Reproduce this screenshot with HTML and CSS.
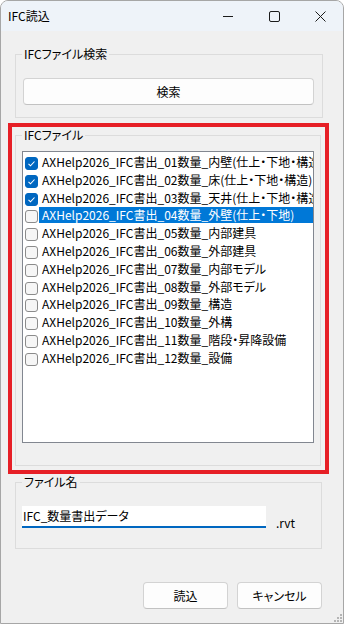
FILE: index.html
```html
<!DOCTYPE html>
<html lang="ja">
<head>
    <meta charset="UTF-8">
    <meta name="viewport" content="width=device-width, initial-scale=1.0">
    <title>IFC読込</title>
    <link rel="stylesheet" href="styles.css">
</head>
<body>

    <div class="window">
        <!-- Title bar -->
        <div class="titlebar">
            <span class="title">IFC読込</span>
            <div class="caption">
                <span class="cap-btn">
                    <svg width="10" height="10" viewBox="0 0 10 10"><path d="M0 5.5h10" stroke="#1b1b1b" stroke-width="1"/></svg>
                </span>
                <span class="cap-btn">
                    <svg width="11" height="11" viewBox="0 0 11 11"><rect x="0.5" y="0.5" width="10" height="10" rx="1.5" fill="none" stroke="#1b1b1b" stroke-width="1"/></svg>
                </span>
                <span class="cap-btn">
                    <svg width="11" height="11" viewBox="0 0 11 11"><path d="M0.5 0.5l10 10M10.5 0.5l-10 10" stroke="#1b1b1b" stroke-width="1"/></svg>
                </span>
            </div>
        </div>

        <div class="client">
            <div class="group group-search">
                <span class="group-title">IFCファイル検索</span>
                <button class="btn btn-search">検索</button>
            </div>

            <!-- red annotation frame -->
            <div class="mark-frame">
                <div class="group group-files">
                    <span class="group-title">IFCファイル</span>
                    <ul class="filelist">
                        <li class="item checked"><span class="check"></span><span class="label">AXHelp2026_IFC書出_01数量_内壁(仕上・下地・構造)</span></li>
                        <li class="item checked"><span class="check"></span><span class="label">AXHelp2026_IFC書出_02数量_床(仕上・下地・構造)</span></li>
                        <li class="item checked"><span class="check"></span><span class="label">AXHelp2026_IFC書出_03数量_天井(仕上・下地・構造)</span></li>
                        <li class="item selected"><span class="check"></span><span class="label">AXHelp2026_IFC書出_04数量_外壁(仕上・下地)</span></li>
                        <li class="item"><span class="check"></span><span class="label">AXHelp2026_IFC書出_05数量_内部建具</span></li>
                        <li class="item"><span class="check"></span><span class="label">AXHelp2026_IFC書出_06数量_外部建具</span></li>
                        <li class="item"><span class="check"></span><span class="label">AXHelp2026_IFC書出_07数量_内部モデル</span></li>
                        <li class="item"><span class="check"></span><span class="label">AXHelp2026_IFC書出_08数量_外部モデル</span></li>
                        <li class="item"><span class="check"></span><span class="label">AXHelp2026_IFC書出_09数量_構造</span></li>
                        <li class="item"><span class="check"></span><span class="label">AXHelp2026_IFC書出_10数量_外構</span></li>
                        <li class="item"><span class="check"></span><span class="label">AXHelp2026_IFC書出_11数量_階段・昇降設備</span></li>
                        <li class="item"><span class="check"></span><span class="label">AXHelp2026_IFC書出_12数量_設備</span></li>
                    </ul>
                </div>
            </div>

            <div class="group group-name">
                <span class="group-title">ファイル名</span>
                <div class="name-row">
                    <div class="textbox">IFC_数量書出データ</div>
                    <span class="ext">.rvt</span>
                </div>
            </div>

            <div class="actions">
                <button class="btn">読込</button>
                <button class="btn">キャンセル</button>
            </div>
        </div>

        <svg class="grip" width="9" height="9" viewBox="0 0 9 9">
            <rect x="6" y="0" width="2" height="2" fill="#b5b5b5"/>
            <rect x="3" y="3" width="2" height="2" fill="#b5b5b5"/>
            <rect x="6" y="3" width="2" height="2" fill="#b5b5b5"/>
            <rect x="0" y="6" width="2" height="2" fill="#b5b5b5"/>
            <rect x="3" y="6" width="2" height="2" fill="#b5b5b5"/>
            <rect x="6" y="6" width="2" height="2" fill="#b5b5b5"/>
        </svg>
    </div>

</body>
</html>
```

FILE: styles.css
```css
body {
    font-family: "Noto Sans CJK JP", "Noto Sans", sans-serif;
    font-size: 12px;
    font-feature-settings: "palt";
    color: #000;
    margin: 0;
    padding: 0;
    background: #fff;
}
.window {
    position: relative;
    width: 344px;
    height: 624px;
    box-sizing: border-box;
    border: 1px solid #a6a6a6;
    border-radius: 8px 8px 0 0;
    background: #f0f0f0;
    overflow: hidden;
}

/* Title bar */
.titlebar {
    height: 30px;
    background: #eef3f9;
    display: flex;
    align-items: center;
    justify-content: space-between;
}
.title {
    padding-left: 7px;
    line-height: 30px;
}
.caption {
    display: flex;
}
.cap-btn {
    width: 46px;
    height: 30px;
    display: flex;
    align-items: center;
    justify-content: center;
}

/* Group boxes */
.client {
    display: flex;
    flex-direction: column;
}
.group {
    position: relative;
    box-sizing: border-box;
    border: 1px solid #dcdcdc;
}
.group-title {
    position: absolute;
    top: -9px;
    left: 6px;
    padding: 0 2px;
    line-height: 16px;
    background: #f0f0f0;
}
.group-search {
    margin: 23px 0 0 14px;
    width: 308px;
    height: 64px;
    padding: 23px 8px 12px 7px;
}
.btn {
    font-family: inherit;
    font-size: 12px;
    font-feature-settings: "palt";
    color: #000;
    height: 27px;
    background: #fdfdfd;
    border: 1px solid #d3d3d3;
    border-bottom-color: #c2c2c2;
    border-radius: 4px;
    padding: 0;
    cursor: pointer;
}
.btn-search {
    width: 291px;
    display: block;
}

/* Red annotation frame */
.mark-frame {
    margin: 5px 0 0 7px;
    width: 321px;
    height: 351px;
    box-sizing: border-box;
    border: 4px solid #e61f26;
}
.group-files {
    margin: 8px 0 0 3px;
    width: 306px;
    height: 331px;
    padding: 15px 0 0 6px;
}
.filelist {
    list-style-type: none;
    margin: 0;
    padding: 2px 0 0 0;
    width: 292px;
    height: 292px;
    box-sizing: border-box;
    background: #fff;
    border: 1px solid #828790;
    overflow: hidden;
}
.item {
    height: 17.8px;
    display: flex;
    align-items: flex-start;
    white-space: nowrap;
}
.check {
    flex: none;
    width: 13px;
    height: 13px;
    box-sizing: border-box;
    margin: 3px 1px 0 2px;
    border: 1px solid #8b8b8b;
    border-radius: 3px;
    background: #f6f6f6;
}
.checked .check {
    border-color: #0067c0;
    background: #0067c0 url("data:image/svg+xml,%3Csvg xmlns='http://www.w3.org/2000/svg' width='11' height='11' viewBox='0 0 11 11'%3E%3Cpath d='M2.5 5.8l2 2 4-4.3' fill='none' stroke='white' stroke-width='1.1'/%3E%3C/svg%3E") center no-repeat;
}
.label {
    flex: 1;
    height: 16px;
    line-height: 16px;
    padding-left: 3px;
    overflow: hidden;
}
.selected .label {
    background: #0078d7;
    color: #fff;
}

/* File name */
.group-name {
    margin: 8px 0 0 14px;
    width: 307px;
    height: 67px;
    padding: 23px 0 0 6px;
}
.name-row {
    display: flex;
    align-items: flex-end;
}
.textbox {
    width: 244px;
    height: 22px;
    box-sizing: border-box;
    background: #fff;
    border-bottom: 2px solid #0067c0;
    padding-left: 1px;
    line-height: 20px;
}
.ext {
    margin-left: 10px;
    line-height: 16px;
    margin-bottom: -3px;
}

/* Bottom buttons */
.actions {
    display: flex;
    justify-content: flex-end;
    gap: 9px;
    margin: 33px 21px 0 0;
}
.actions .btn {
    width: 85px;
}

.grip {
    position: absolute;
    right: 0;
    bottom: 0;
}
```
